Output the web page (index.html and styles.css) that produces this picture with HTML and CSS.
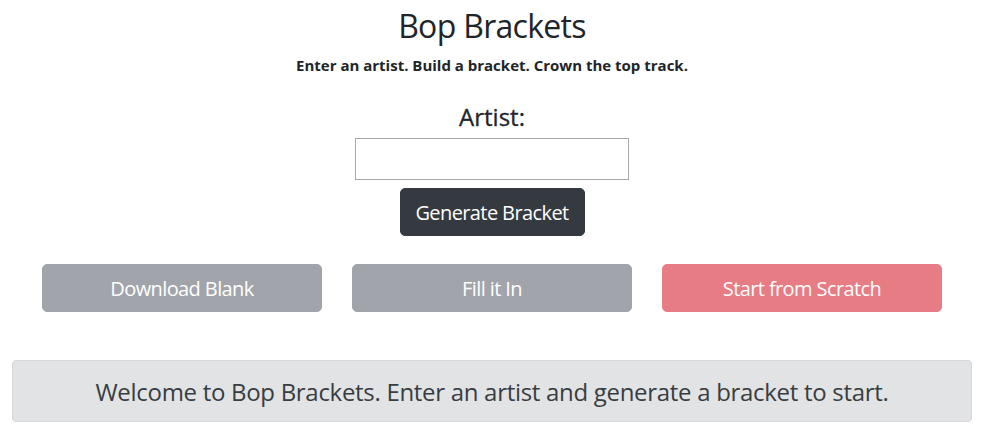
FILE: index.html
```html
<!DOCTYPE html>
<html lang="en">
<head>
<meta charset="utf-8">
<title>Bop Brackets</title>
<link rel="stylesheet" href="styles.css">
</head>
<body>
<header class="header">
  <h1 class="title">Bop Brackets</h1>
  <p class="tagline">Enter an artist. Build a bracket. Crown the top track.</p>
</header>
<form class="artist-form" onsubmit="return false;">
  <label class="artist-label" for="artist">Artist:</label>
  <input class="artist-input" id="artist" type="text">
  <button class="btn btn-dark" type="submit">Generate Bracket</button>
</form>
<div class="actions">
  <button class="btn btn-wide btn-gray" type="button">Download Blank</button>
  <button class="btn btn-wide btn-gray" type="button">Fill it In</button>
  <button class="btn btn-wide btn-red" type="button">Start from Scratch</button>
</div>
<div class="alert">Welcome to Bop Brackets. Enter an artist and generate a bracket to start.</div>
</body>
</html>
```
FILE: styles.css
```css
* { box-sizing: border-box; }
html, body { margin: 0; padding: 0; background: #fff; }
body {
  font-family: "Open Sans", "Noto Sans", sans-serif;
  color: #212529;
}
.header {
  text-align: center;
  padding-top: 7px;
}
.title {
  margin: 0;
  font-size: 32px;
  line-height: 38px;
  font-weight: 400;
  letter-spacing: -0.7px;
}
.tagline {
  margin: 10px 0 0;
  font-size: 15px;
  line-height: 21px;
  font-weight: 700;
}
.artist-form {
  display: flex;
  flex-direction: column;
  align-items: center;
  margin-top: 26px;
}
.artist-label {
  font-size: 24px;
  line-height: 29px;
  font-weight: 500;
  -webkit-text-stroke: 0.3px #212529;
}
.artist-input {
  margin-top: 7px;
  width: 274px;
  height: 42px;
  border: 1px solid #a9a9a9;
  border-radius: 0;
  padding: 2px 4px;
  font-size: 16px;
  font-family: inherit;
}
.btn {
  font-family: inherit;
  font-size: 20px;
  line-height: 30px;
  letter-spacing: -0.6px;
  padding: 9px 16px;
  height: 48px;
  border: 1px solid transparent;
  border-radius: 5px;
  color: #fff;
  cursor: pointer;
}
.btn-dark {
  margin-top: 8px;
  width: 185px;
  padding: 9px 0;
  background: #343a40;
  border-color: #343a40;
}
.actions {
  display: flex;
  gap: 30px;
  padding: 0 42px;
  margin-top: 28px;
}
.btn-wide { flex: 1; }
.btn-gray { background: #a1a5ab; border-color: #a1a5ab; }
.btn-red { background: #e77c84; border-color: #e77c84; }
.alert {
  margin: 48px 12px 0;
  height: 62px;
  display: flex;
  align-items: center;
  justify-content: center;
  background: #e2e3e5;
  border: 1px solid #d6d8db;
  border-radius: 4px;
  color: #383d41;
  font-size: 24px;
  letter-spacing: -0.3px;
}
```
